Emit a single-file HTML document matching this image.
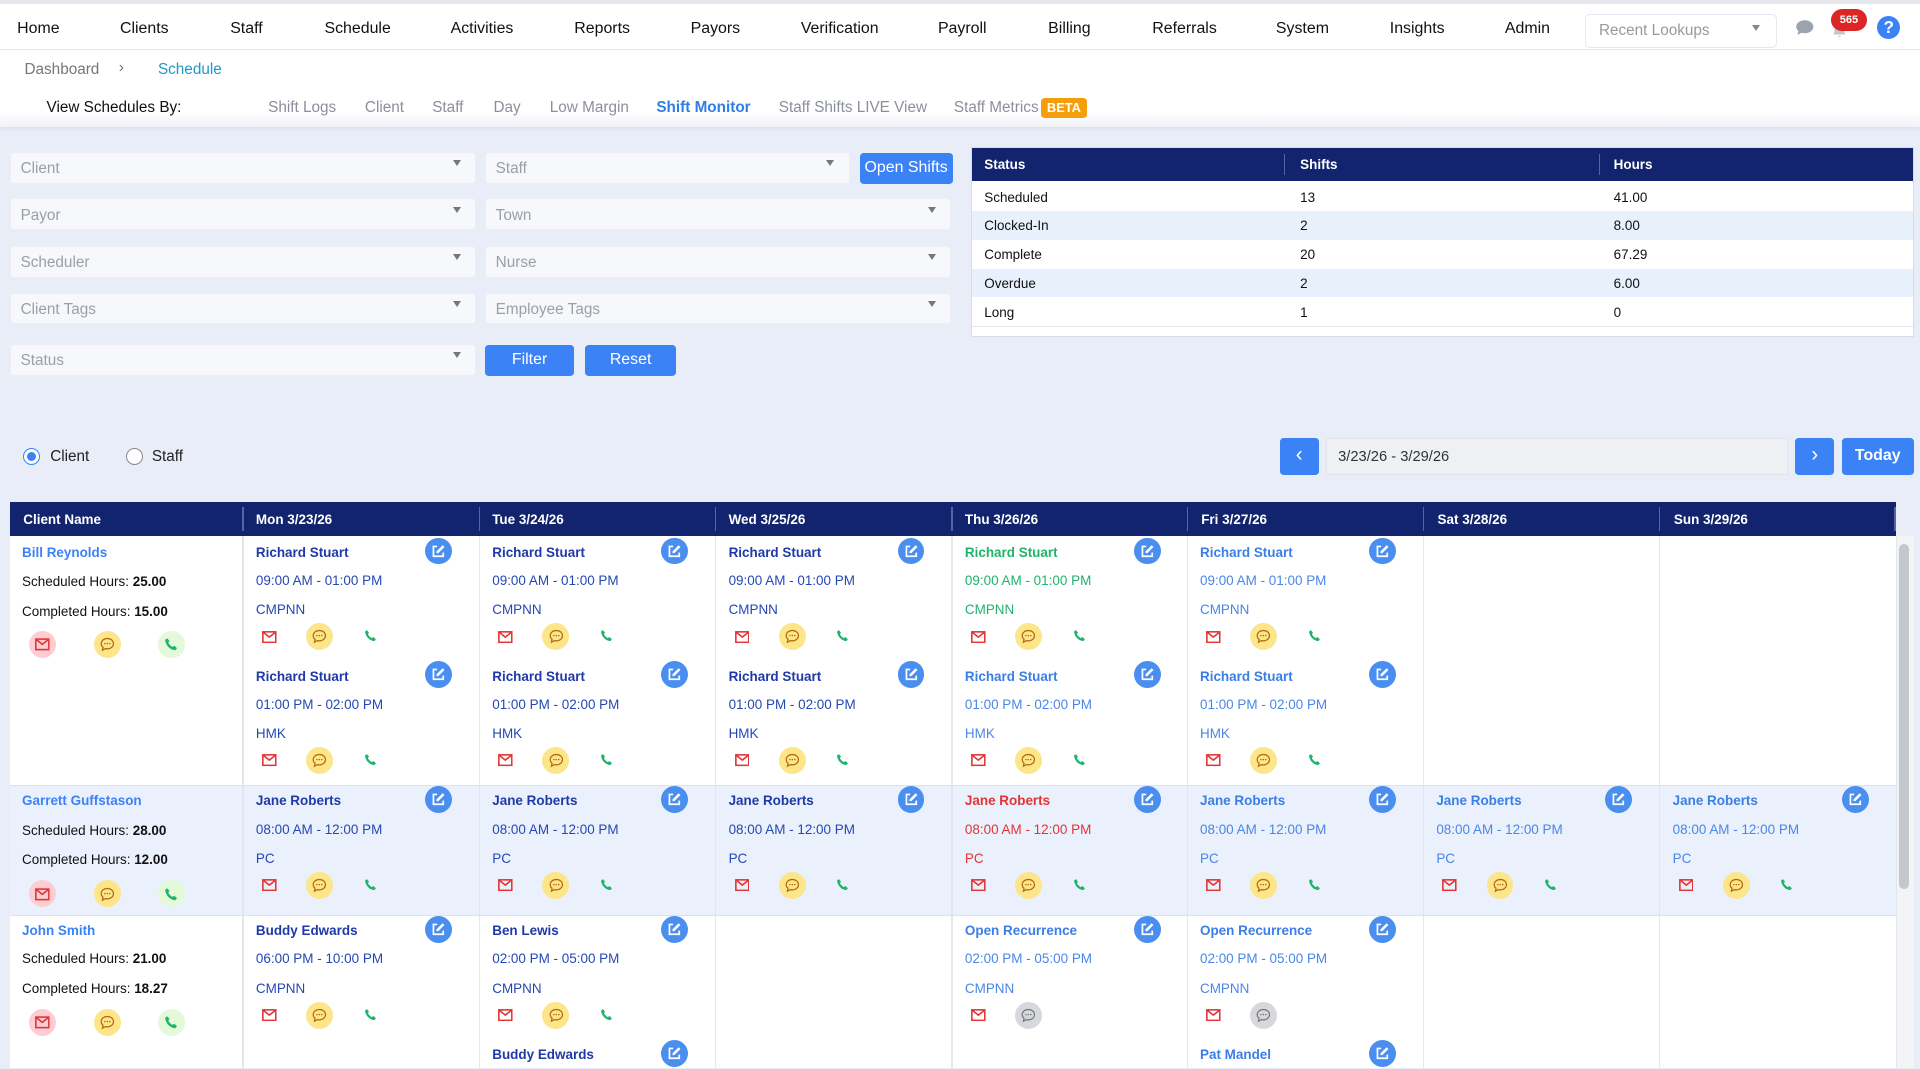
<!DOCTYPE html>
<html><head><meta charset="utf-8"><style>
html,body{margin:0;padding:0;width:1920px;height:1069px;overflow:hidden;background:#e9edf7}
#w{zoom:1.2245;width:1568px;height:872px;position:relative;overflow:hidden;font-family:"Liberation Sans",Arial,sans-serif;color:#222}
.a{position:absolute}
#nav{left:0;top:0;width:1568px;height:41px;background:#fff;border-top:4px solid #e5e7ec;box-sizing:border-box;border-bottom:1px solid #e3e5ea}
#nav span{position:absolute;top:13px;font-size:13px;color:#111}
#bc{top:41px;left:0;width:1568px;height:32px;background:#fff;border-bottom:1px solid #e6e8ee}
#sb{top:73px;left:0;width:1568px;height:31px;background:linear-gradient(#fff 60%,#f1f2f6);box-shadow:0 2px 3px rgba(0,0,0,.05)}
#sb span{position:absolute;top:8px;font-size:12.5px;color:#8a8f99}
.f{position:absolute;height:26px;background:#f7f8fb;border:1px solid #eceef3;border-radius:3px;box-sizing:border-box;font-size:12.5px;color:#9aa0a8;padding:6px 8px}
.f:after{content:"";position:absolute;right:12px;top:6px;border:4px solid transparent;border-top:5px solid #777}
.btn{position:absolute;background:#3b82f6;color:#fff;font-size:13px;border-radius:3px;text-align:center;box-sizing:border-box}
#st{left:793px;top:120px;width:770px;height:155px;background:#fff;border:1px solid #d8dce6;box-sizing:border-box}
#st .h{position:absolute;left:0;top:0;width:100%;height:27px;background:#13246e}
#st .h span{position:absolute;top:7px;color:#fff;font-size:11px;font-weight:bold}
#st .r{position:absolute;left:0;width:100%;height:23.5px;font-size:11px;color:#111}
#st .r span{position:absolute;top:6px}
.g1{left:10px}.g2{left:268px}.g3{left:524px}
#gh{left:8px;top:410px;width:1540px;height:28px;background:#13246e}
#gh span{position:absolute;top:8px;color:#fff;font-size:11px;font-weight:bold}
.sep{position:absolute;top:4px;width:1px;height:20px;background:#5464a8}
.row{position:absolute;left:8px;width:1540px}
.vl{position:absolute;top:438px;width:1px;height:435px;background:#e3e6ee}
.sh{position:absolute;width:192px;height:100px;font-size:11px}
.sh .n{position:absolute;left:11px;top:7px;font-weight:bold;color:#1f3aa8}
.sh .t{position:absolute;left:11px;top:30px;color:#2447b5}
.sh .l{position:absolute;left:11px;top:54px;color:#2447b5}
.sh .e{position:absolute;left:149px;top:1px;width:22px;height:22px;border-radius:50%;background:#4a8ff0}
.sh .e svg,.ci svg{position:absolute;left:5px;top:5px;width:12px;height:12px}
.sh .m{position:absolute;left:16px;top:77px;width:12px;height:10px}
.sh .c,.ci{position:absolute;width:22px;height:22px;border-radius:50%;background:#fde58a}
.sh .c{left:52px;top:71px}
.sh .c.gy{background:#d6d8dd}
.sh .p{position:absolute;left:99px;top:76px;width:11px;height:11px}
.g .n,.g .t,.g .l{color:#1fb36c}
.r .n,.r .t,.r .l{color:#e23434}
.lb .n{color:#3b7ee6}.lb .t,.lb .l{color:#4a86e8}
.cn{position:absolute;font-size:11px;color:#111}
.cn a{color:#3b82f6;font-weight:bold}
</style></head><body><div id="w">
<svg width="0" height="0" style="position:absolute"><defs>
<symbol id="ed" viewBox="0 0 12 12"><path d="M5 2H2v8h8V7" fill="none" stroke="#fff" stroke-width="1.4"/><path d="M9.5 1l1.5 1.5L6 7.5H4.5V6z" fill="#fff"/></symbol>
<symbol id="ml" viewBox="0 0 12 10"><rect x=".7" y=".7" width="10.6" height="8.6" fill="none" stroke="#e23434" stroke-width="1.3"/><path d="M1 1l5 4 5-4" fill="none" stroke="#e23434" stroke-width="1.3"/></symbol>
<symbol id="ch" viewBox="0 0 12 12"><path d="M6 1.2C3.2 1.2 1 3 1 5.4c0 1.2.6 2.3 1.5 3L2 10.8l2.4-1.3c.5.2 1 .2 1.6.2 2.8 0 5-1.9 5-4.3S8.8 1.2 6 1.2z" fill="none" stroke="#b2690d" stroke-width="1"/><circle cx="4" cy="5.4" r=".6" fill="#b2690d"/><circle cx="6" cy="5.4" r=".6" fill="#b2690d"/><circle cx="8" cy="5.4" r=".6" fill="#b2690d"/></symbol>
<symbol id="chg" viewBox="0 0 12 12"><path d="M6 1.2C3.2 1.2 1 3 1 5.4c0 1.2.6 2.3 1.5 3L2 10.8l2.4-1.3c.5.2 1 .2 1.6.2 2.8 0 5-1.9 5-4.3S8.8 1.2 6 1.2z" fill="none" stroke="#777" stroke-width="1"/><circle cx="4" cy="5.4" r=".6" fill="#777"/><circle cx="6" cy="5.4" r=".6" fill="#777"/><circle cx="8" cy="5.4" r=".6" fill="#777"/></symbol>
<symbol id="ph" viewBox="0 0 12 12"><path d="M2.5 1l2 2.2-1 1.4c.7 1.5 2 2.8 3.5 3.5l1.4-1 2.2 2-1.3 1.7C5 10.5 1.5 7 .9 2.3z" fill="#1fb36c"/></symbol>
</defs></svg>

<div id="nav" class="a">
<span style="left:14px">Home</span><span style="left:98px">Clients</span><span style="left:188px">Staff</span><span style="left:265px">Schedule</span><span style="left:368px">Activities</span><span style="left:469px">Reports</span><span style="left:564px">Payors</span><span style="left:654px">Verification</span><span style="left:766px">Payroll</span><span style="left:856px">Billing</span><span style="left:941px">Referrals</span><span style="left:1042px">System</span><span style="left:1135px">Insights</span><span style="left:1229px">Admin</span>
<div class="a" style="left:1294px;top:8px;width:157px;height:28px;border:1px solid #e6e8ee;border-radius:4px;box-sizing:border-box;font-size:12.5px;color:#999;padding:6px 11px">Recent Lookups<i class="a" style="right:13px;top:8px;border:4px solid transparent;border-top:5px solid #888"></i></div>
<svg class="a" style="left:1466px;top:12px" width="16" height="14" viewBox="0 0 16 14"><path d="M8 1C4 1 1 3.3 1 6.3c0 1.4.7 2.6 1.8 3.5L2 13l3.4-1.8c.8.2 1.7.4 2.6.4 4 0 7-2.4 7-5.3S12 1 8 1z" fill="#9ca3af"/></svg>
<svg class="a" style="left:1496px;top:14px" width="12" height="14" viewBox="0 0 12 14"><path d="M6 1a4 4 0 0 0-4 4v4L1 11h10l-1-2V5a4 4 0 0 0-4-4zM5 12h2v1H5z" fill="#c2c6cc"/></svg>
<div class="a" style="left:1495px;top:4px;width:30px;height:18px;border-radius:9px;background:#dc2626;color:#fff;font-size:9px;font-weight:bold;text-align:center;line-height:18px">565</div>
<div class="a" style="left:1533px;top:10px;width:19px;height:19px;border-radius:50%;background:#3b82f6;color:#fff;font-size:14px;font-weight:bold;text-align:center;line-height:19px">?</div>
</div>
<div id="bc" class="a"><span class="a" style="left:20px;top:9px;font-size:12.5px;color:#777">Dashboard</span><span class="a" style="left:97px;top:7px;font-size:13px;color:#777">›</span><span class="a" style="left:129px;top:9px;font-size:12.5px;color:#2196c9">Schedule</span></div>
<div id="sb" class="a">
<span style="left:38px;color:#111">View Schedules By:</span>
<span style="left:219px">Shift Logs</span><span style="left:298px">Client</span><span style="left:353px">Staff</span><span style="left:403px">Day</span><span style="left:449px">Low Margin</span><span style="left:536px;color:#2f7ee8;font-weight:bold">Shift Monitor</span><span style="left:636px">Staff Shifts LIVE View</span><span style="left:779px">Staff Metrics</span>
<span style="left:850px;top:7px;background:#f59e0b;color:#fff;font-size:10.5px;font-weight:bold;padding:2px 5px;border-radius:3px">BETA</span>
</div>

<div class="f" style="left:8px;top:124px;width:381px">Client</div>
<div class="f" style="left:396px;top:124px;width:298px">Staff</div>
<div class="btn" style="left:702px;top:125px;width:76px;height:25px;line-height:25px">Open Shifts</div>
<div class="f" style="left:8px;top:162px;width:381px">Payor</div>
<div class="f" style="left:396px;top:162px;width:381px">Town</div>
<div class="f" style="left:8px;top:201px;width:381px">Scheduler</div>
<div class="f" style="left:396px;top:201px;width:381px">Nurse</div>
<div class="f" style="left:8px;top:239px;width:381px">Client Tags</div>
<div class="f" style="left:396px;top:239px;width:381px">Employee Tags</div>
<div class="f" style="left:8px;top:281px;width:381px">Status</div>
<div class="btn" style="left:396px;top:282px;width:73px;height:25px;line-height:25px">Filter</div>
<div class="btn" style="left:478px;top:282px;width:74px;height:25px;line-height:25px">Reset</div>

<div id="st" class="a">
<div class="h"><span class="g1">Status</span><span class="g2">Shifts</span><span class="g3">Hours</span><i class="a" style="left:255px;top:5px;width:1px;height:17px;background:#5464a8"></i><i class="a" style="left:512px;top:5px;width:1px;height:17px;background:#5464a8"></i></div>
<div class="r" style="top:28px;background:#fff"><span class="g1">Scheduled</span><span class="g2">13</span><span class="g3">41.00</span></div>
<div class="r" style="top:51.5px;background:#e8f0fc"><span class="g1">Clocked-In</span><span class="g2">2</span><span class="g3">8.00</span></div>
<div class="r" style="top:75px;background:#fff"><span class="g1">Complete</span><span class="g2">20</span><span class="g3">67.29</span></div>
<div class="r" style="top:98.5px;background:#e8f0fc"><span class="g1">Overdue</span><span class="g2">2</span><span class="g3">6.00</span></div>
<div class="r" style="top:122px;background:#fff;border-bottom:1px solid #e6e8ee"><span class="g1">Long</span><span class="g2">1</span><span class="g3">0</span></div>
</div>

<div class="a" style="left:19px;top:366px;width:14px;height:14px;border-radius:50%;border:1px solid #3b82f6;box-sizing:border-box;background:#fff"><i class="a" style="left:2px;top:2px;width:8px;height:8px;border-radius:50%;background:#3b82f6"></i></div>
<span class="a" style="left:41px;top:366px;font-size:12.5px;color:#222">Client</span>
<div class="a" style="left:103px;top:366px;width:14px;height:14px;border-radius:50%;border:1px solid #888;box-sizing:border-box;background:#fff"></div>
<span class="a" style="left:124px;top:366px;font-size:12.5px;color:#222">Staff</span>

<div class="btn" style="left:1045px;top:358px;width:32px;height:30px;line-height:28px;font-size:17px">‹</div>
<div class="a" style="left:1083px;top:358px;width:377px;height:30px;background:#eef0f4;border:1px solid #e1e4ea;box-sizing:border-box;font-size:12px;padding:8px 9px;color:#333">3/23/26 - 3/29/26</div>
<div class="btn" style="left:1466px;top:358px;width:32px;height:30px;line-height:28px;font-size:17px">›</div>
<div class="btn" style="left:1504px;top:358px;width:59px;height:30px;line-height:30px;font-weight:bold">Today</div>

<div class="row" style="top:438px;height:203px;background:#fff"></div>
<div class="row" style="top:641px;height:106px;background:#eaf1fc;border-top:1px solid #dde3ee"></div>
<div class="row" style="top:747px;height:130px;background:#fff;border-top:1px solid #dde3ee"></div>
<div class="a" style="left:1548px;top:438px;width:15px;height:435px;background:#f3f4f6"></div>
<div class="a" style="left:1551px;top:444px;width:8px;height:282px;border-radius:4px;background:#c4c7cc"></div>
<i class="vl" style="left:198px"></i><i class="vl" style="left:391px"></i><i class="vl" style="left:584px"></i><i class="vl" style="left:777px"></i><i class="vl" style="left:969px"></i><i class="vl" style="left:1162px"></i><i class="vl" style="left:1355px"></i><i class="vl" style="left:1548px"></i>

<div id="gh" class="a">
<span style="left:11px">Client Name</span><i class="sep" style="left:190px"></i>
<span style="left:201px">Mon 3/23/26</span><i class="sep" style="left:383px"></i>
<span style="left:394px">Tue 3/24/26</span><i class="sep" style="left:576px"></i>
<span style="left:587px">Wed 3/25/26</span><i class="sep" style="left:769px"></i>
<span style="left:780px">Thu 3/26/26</span><i class="sep" style="left:961px"></i>
<span style="left:973px">Fri 3/27/26</span><i class="sep" style="left:1154px"></i>
<span style="left:1166px">Sat 3/28/26</span><i class="sep" style="left:1347px"></i>
<span style="left:1359px">Sun 3/29/26</span><i class="sep" style="left:1539px"></i>
</div>

<div class="cn" style="left:18px;top:445px"><a>Bill Reynolds</a></div>
<div class="cn" style="left:18px;top:469px">Scheduled Hours: <b>25.00</b></div>
<div class="cn" style="left:18px;top:493px">Completed Hours: <b>15.00</b></div>
<div class="ci" style="left:24px;top:515px;background:#fecdd3"><svg><use href="#ml"/></svg></div>
<div class="ci" style="left:77px;top:515px"><svg><use href="#ch"/></svg></div>
<div class="ci" style="left:129px;top:515px;background:#e4f9d8"><svg><use href="#ph"/></svg></div>

<div class="cn" style="left:18px;top:648px"><a>Garrett Guffstason</a></div>
<div class="cn" style="left:18px;top:672px">Scheduled Hours: <b>28.00</b></div>
<div class="cn" style="left:18px;top:696px">Completed Hours: <b>12.00</b></div>
<div class="ci" style="left:24px;top:719px;background:#fecdd3"><svg><use href="#ml"/></svg></div>
<div class="ci" style="left:77px;top:719px"><svg><use href="#ch"/></svg></div>
<div class="ci" style="left:129px;top:719px;background:#e4f9d8"><svg><use href="#ph"/></svg></div>

<div class="cn" style="left:18px;top:754px"><a>John Smith</a></div>
<div class="cn" style="left:18px;top:777px">Scheduled Hours: <b>21.00</b></div>
<div class="cn" style="left:18px;top:801px">Completed Hours: <b>18.27</b></div>
<div class="ci" style="left:24px;top:824px;background:#fecdd3"><svg><use href="#ml"/></svg></div>
<div class="ci" style="left:77px;top:824px"><svg><use href="#ch"/></svg></div>
<div class="ci" style="left:129px;top:824px;background:#e4f9d8"><svg><use href="#ph"/></svg></div>

<div class="sh" style="left:198px;top:438px"><b class="n">Richard Stuart</b><i class="e"><svg><use href="#ed"/></svg></i><span class="t">09:00 AM - 01:00 PM</span><span class="l">CMPNN</span><svg class="m"><use href="#ml"/></svg><i class="c"><svg style="position:absolute;left:5px;top:5px;width:12px;height:12px"><use href="#ch"/></svg></i><svg class="p"><use href="#ph"/></svg></div>
<div class="sh" style="left:391px;top:438px"><b class="n">Richard Stuart</b><i class="e"><svg><use href="#ed"/></svg></i><span class="t">09:00 AM - 01:00 PM</span><span class="l">CMPNN</span><svg class="m"><use href="#ml"/></svg><i class="c"><svg style="position:absolute;left:5px;top:5px;width:12px;height:12px"><use href="#ch"/></svg></i><svg class="p"><use href="#ph"/></svg></div>
<div class="sh" style="left:584px;top:438px"><b class="n">Richard Stuart</b><i class="e"><svg><use href="#ed"/></svg></i><span class="t">09:00 AM - 01:00 PM</span><span class="l">CMPNN</span><svg class="m"><use href="#ml"/></svg><i class="c"><svg style="position:absolute;left:5px;top:5px;width:12px;height:12px"><use href="#ch"/></svg></i><svg class="p"><use href="#ph"/></svg></div>
<div class="sh g" style="left:777px;top:438px"><b class="n">Richard Stuart</b><i class="e"><svg><use href="#ed"/></svg></i><span class="t">09:00 AM - 01:00 PM</span><span class="l">CMPNN</span><svg class="m"><use href="#ml"/></svg><i class="c"><svg style="position:absolute;left:5px;top:5px;width:12px;height:12px"><use href="#ch"/></svg></i><svg class="p"><use href="#ph"/></svg></div>
<div class="sh lb" style="left:969px;top:438px"><b class="n">Richard Stuart</b><i class="e"><svg><use href="#ed"/></svg></i><span class="t">09:00 AM - 01:00 PM</span><span class="l">CMPNN</span><svg class="m"><use href="#ml"/></svg><i class="c"><svg style="position:absolute;left:5px;top:5px;width:12px;height:12px"><use href="#ch"/></svg></i><svg class="p"><use href="#ph"/></svg></div>

<div class="sh" style="left:198px;top:539px"><b class="n">Richard Stuart</b><i class="e"><svg><use href="#ed"/></svg></i><span class="t">01:00 PM - 02:00 PM</span><span class="l">HMK</span><svg class="m"><use href="#ml"/></svg><i class="c"><svg style="position:absolute;left:5px;top:5px;width:12px;height:12px"><use href="#ch"/></svg></i><svg class="p"><use href="#ph"/></svg></div>
<div class="sh" style="left:391px;top:539px"><b class="n">Richard Stuart</b><i class="e"><svg><use href="#ed"/></svg></i><span class="t">01:00 PM - 02:00 PM</span><span class="l">HMK</span><svg class="m"><use href="#ml"/></svg><i class="c"><svg style="position:absolute;left:5px;top:5px;width:12px;height:12px"><use href="#ch"/></svg></i><svg class="p"><use href="#ph"/></svg></div>
<div class="sh" style="left:584px;top:539px"><b class="n">Richard Stuart</b><i class="e"><svg><use href="#ed"/></svg></i><span class="t">01:00 PM - 02:00 PM</span><span class="l">HMK</span><svg class="m"><use href="#ml"/></svg><i class="c"><svg style="position:absolute;left:5px;top:5px;width:12px;height:12px"><use href="#ch"/></svg></i><svg class="p"><use href="#ph"/></svg></div>
<div class="sh lb" style="left:777px;top:539px"><b class="n">Richard Stuart</b><i class="e"><svg><use href="#ed"/></svg></i><span class="t">01:00 PM - 02:00 PM</span><span class="l">HMK</span><svg class="m"><use href="#ml"/></svg><i class="c"><svg style="position:absolute;left:5px;top:5px;width:12px;height:12px"><use href="#ch"/></svg></i><svg class="p"><use href="#ph"/></svg></div>
<div class="sh lb" style="left:969px;top:539px"><b class="n">Richard Stuart</b><i class="e"><svg><use href="#ed"/></svg></i><span class="t">01:00 PM - 02:00 PM</span><span class="l">HMK</span><svg class="m"><use href="#ml"/></svg><i class="c"><svg style="position:absolute;left:5px;top:5px;width:12px;height:12px"><use href="#ch"/></svg></i><svg class="p"><use href="#ph"/></svg></div>

<div class="sh" style="left:198px;top:641px"><b class="n">Jane Roberts</b><i class="e"><svg><use href="#ed"/></svg></i><span class="t">08:00 AM - 12:00 PM</span><span class="l">PC</span><svg class="m"><use href="#ml"/></svg><i class="c"><svg style="position:absolute;left:5px;top:5px;width:12px;height:12px"><use href="#ch"/></svg></i><svg class="p"><use href="#ph"/></svg></div>
<div class="sh" style="left:391px;top:641px"><b class="n">Jane Roberts</b><i class="e"><svg><use href="#ed"/></svg></i><span class="t">08:00 AM - 12:00 PM</span><span class="l">PC</span><svg class="m"><use href="#ml"/></svg><i class="c"><svg style="position:absolute;left:5px;top:5px;width:12px;height:12px"><use href="#ch"/></svg></i><svg class="p"><use href="#ph"/></svg></div>
<div class="sh" style="left:584px;top:641px"><b class="n">Jane Roberts</b><i class="e"><svg><use href="#ed"/></svg></i><span class="t">08:00 AM - 12:00 PM</span><span class="l">PC</span><svg class="m"><use href="#ml"/></svg><i class="c"><svg style="position:absolute;left:5px;top:5px;width:12px;height:12px"><use href="#ch"/></svg></i><svg class="p"><use href="#ph"/></svg></div>
<div class="sh r" style="left:777px;top:641px"><b class="n">Jane Roberts</b><i class="e"><svg><use href="#ed"/></svg></i><span class="t">08:00 AM - 12:00 PM</span><span class="l">PC</span><svg class="m"><use href="#ml"/></svg><i class="c"><svg style="position:absolute;left:5px;top:5px;width:12px;height:12px"><use href="#ch"/></svg></i><svg class="p"><use href="#ph"/></svg></div>
<div class="sh lb" style="left:969px;top:641px"><b class="n">Jane Roberts</b><i class="e"><svg><use href="#ed"/></svg></i><span class="t">08:00 AM - 12:00 PM</span><span class="l">PC</span><svg class="m"><use href="#ml"/></svg><i class="c"><svg style="position:absolute;left:5px;top:5px;width:12px;height:12px"><use href="#ch"/></svg></i><svg class="p"><use href="#ph"/></svg></div>
<div class="sh lb" style="left:1162px;top:641px"><b class="n">Jane Roberts</b><i class="e"><svg><use href="#ed"/></svg></i><span class="t">08:00 AM - 12:00 PM</span><span class="l">PC</span><svg class="m"><use href="#ml"/></svg><i class="c"><svg style="position:absolute;left:5px;top:5px;width:12px;height:12px"><use href="#ch"/></svg></i><svg class="p"><use href="#ph"/></svg></div>
<div class="sh lb" style="left:1355px;top:641px"><b class="n">Jane Roberts</b><i class="e"><svg><use href="#ed"/></svg></i><span class="t">08:00 AM - 12:00 PM</span><span class="l">PC</span><svg class="m"><use href="#ml"/></svg><i class="c"><svg style="position:absolute;left:5px;top:5px;width:12px;height:12px"><use href="#ch"/></svg></i><svg class="p"><use href="#ph"/></svg></div>

<div class="sh" style="left:198px;top:747px"><b class="n">Buddy Edwards</b><i class="e"><svg><use href="#ed"/></svg></i><span class="t">06:00 PM - 10:00 PM</span><span class="l">CMPNN</span><svg class="m"><use href="#ml"/></svg><i class="c"><svg style="position:absolute;left:5px;top:5px;width:12px;height:12px"><use href="#ch"/></svg></i><svg class="p"><use href="#ph"/></svg></div>
<div class="sh" style="left:391px;top:747px"><b class="n">Ben Lewis</b><i class="e"><svg><use href="#ed"/></svg></i><span class="t">02:00 PM - 05:00 PM</span><span class="l">CMPNN</span><svg class="m"><use href="#ml"/></svg><i class="c"><svg style="position:absolute;left:5px;top:5px;width:12px;height:12px"><use href="#ch"/></svg></i><svg class="p"><use href="#ph"/></svg></div>
<div class="sh lb" style="left:777px;top:747px"><b class="n">Open Recurrence</b><i class="e"><svg><use href="#ed"/></svg></i><span class="t">02:00 PM - 05:00 PM</span><span class="l">CMPNN</span><svg class="m"><use href="#ml"/></svg><i class="c gy"><svg style="position:absolute;left:5px;top:5px;width:12px;height:12px"><use href="#chg"/></svg></i></div>
<div class="sh lb" style="left:969px;top:747px"><b class="n">Open Recurrence</b><i class="e"><svg><use href="#ed"/></svg></i><span class="t">02:00 PM - 05:00 PM</span><span class="l">CMPNN</span><svg class="m"><use href="#ml"/></svg><i class="c gy"><svg style="position:absolute;left:5px;top:5px;width:12px;height:12px"><use href="#chg"/></svg></i></div>
<div class="sh" style="left:391px;top:848px"><b class="n">Buddy Edwards</b><i class="e"><svg><use href="#ed"/></svg></i></div>
<div class="sh lb" style="left:969px;top:848px"><b class="n">Pat Mandel</b><i class="e"><svg><use href="#ed"/></svg></i></div>
</div></body></html>
